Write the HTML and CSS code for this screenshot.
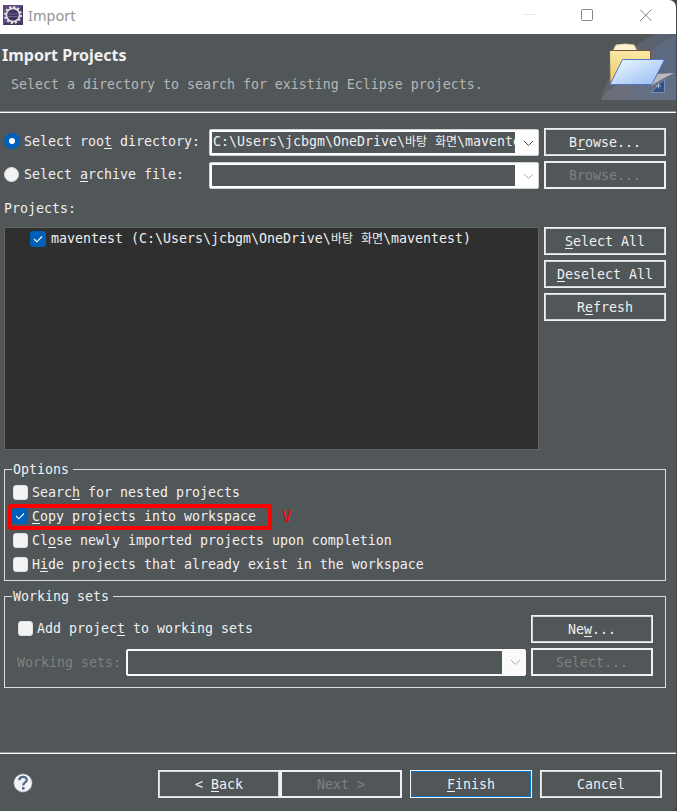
FILE: index.html
```html
<!DOCTYPE html>
<html lang="ko">
<head>
    <meta charset="UTF-8">
    <meta name="viewport" content="width=device-width, initial-scale=1.0">
    <title>Import</title>
    <link rel="stylesheet" href="styles.css">
</head>
<body>
    <div class="window">
        <header class="titlebar">
            <svg class="app-icon" width="20" height="20" viewBox="0 0 20 20">
                <rect width="20" height="20" fill="#5d4a82"/>
                <path d="M0 20L20 0V20Z" fill="#493763"/>
                <circle cx="10" cy="10" r="8" fill="none" stroke="#e4e1df" stroke-width="2" stroke-dasharray="2.2 1.99"/>
                <circle cx="10" cy="10" r="6.600" fill="#3d3561" stroke="#e4e1df" stroke-width="1.600"/>
                <path d="M4.7 9H15.3M5 11.5H15" stroke="#6b6290"/>
            </svg>
            <span class="title">Import</span>
            <svg class="controls" width="140" height="20" viewBox="0 0 140 20">
                <path d="M7 9.500H19" stroke="#e8e8e8"/>
                <rect x="65.500" y="4.500" width="11" height="11" rx="1" fill="none" stroke="#858585"/>
                <path d="M124 4.500L135.500 16M135.500 4.500L124 16" stroke="#858585"/>
            </svg>
        </header>

        <section class="banner">
            <div class="banner-text">
                <h1>Import Projects</h1>
                <p>Select a directory to search for existing Eclipse projects.</p>
            </div>
            <svg class="banner-icon" width="75" height="66" viewBox="0 0 75 66">
                <defs>
                    <linearGradient id="bg" x1="0" y1="0" x2="1" y2="0">
                        <stop offset="0" stop-color="#6b7079"/>
                        <stop offset="1" stop-color="#5c6b88"/>
                    </linearGradient>
                    <linearGradient id="back" x1="0" y1="0" x2="0" y2="1">
                        <stop offset="0" stop-color="#fbe9a4"/>
                        <stop offset="1" stop-color="#e9c862"/>
                    </linearGradient>
                    <linearGradient id="front" x1="0" y1="0" x2="1" y2="1">
                        <stop offset="0" stop-color="#f2fbff"/>
                        <stop offset="1" stop-color="#92b9f2"/>
                    </linearGradient>
                </defs>
                <path d="M0 66C5 43 22 16 54 0H75V66Z" fill="url(#bg)" opacity=".55"/>
                <path d="M0 66C8 53 20 45 75 39V66Z" fill="#747986" opacity=".55"/>
                <path d="M31 66C29 43 42 12 75 2V66Z" fill="#62708c" opacity=".5"/>
                <path d="M56 40L73 39Q60 45 50 52Z" fill="#b9b9be"/>
                <path d="M12 17L15 11Q25 9 33 11L36 17Z" fill="#fff3cf" stroke="#e5cf98"/>
                <path d="M8.500 17.500Q8.500 16.500 10 16.500H48Q49.500 16.500 49.500 18V30L9 49.500Z" fill="url(#back)" stroke="#755044"/>
                <path d="M21.500 25.500H63.500L51 50.500H9Z" fill="url(#front)" stroke="#5775c6" stroke-linejoin="round"/>
                <path d="M63.500 45V58.500H50Z" fill="#315187" stroke="#7392bc"/>
                <path d="M57.500 49.500V54.500M55 52H60" stroke="#dce8f4" stroke-width=".6"/>
            </svg>
        </section>

        <main>
            <div class="source">
                <span class="radio checked"></span>
                <label>Select roo<u>t</u> directory:</label>
                <div class="combo">
                    <span class="value">C:\Users\jcbgm\OneDrive\<span class="ko">바탕</span> <span class="ko">화면</span>\maventest</span>
                    <svg class="arrow" width="11" height="7" viewBox="0 0 11 7"><path d="M1 1L5.500 5.500L10 1"/></svg>
                </div>
                <div class="button">B<u>r</u>owse...</div>
            </div>
            <div class="source">
                <span class="radio"></span>
                <label>Select <u>a</u>rchive file:</label>
                <div class="combo disabled">
                    <span class="value"></span>
                    <svg class="arrow" width="11" height="7" viewBox="0 0 11 7"><path d="M1 1L5.500 5.500L10 1"/></svg>
                </div>
                <div class="button disabled">Browse...</div>
            </div>

            <div class="projects-label">Projects:</div>
            <div class="projects">
                <div class="tree">
                    <div class="tree-item">
                        <span class="checkbox checked"><svg width="10" height="8" viewBox="0 0 10 8"><path d="M1 4L3.800 6.800L9 1.500"/></svg></span>
                        <span>maventest (C:\Users\jcbgm\OneDrive\<span class="ko">바탕</span> <span class="ko">화면</span>\maventest)</span>
                    </div>
                </div>
                <div class="side-buttons">
                    <div class="button"><u>S</u>elect All</div>
                    <div class="button"><u>D</u>eselect All</div>
                    <div class="button">R<u>e</u>fresh</div>
                </div>
            </div>

            <fieldset class="options">
                <legend>Options</legend>
                <div class="option">
                    <span class="checkbox"></span>
                    <span>Searc<u>h</u> for nested projects</span>
                </div>
                <div class="option marked">
                    <span class="checkbox checked"><svg width="10" height="8" viewBox="0 0 10 8"><path d="M1 4L3.800 6.800L9 1.500"/></svg></span>
                    <span><u>C</u>opy projects into workspace</span>
                    <span class="outline"></span>
                    <span class="mark">V</span>
                </div>
                <div class="option">
                    <span class="checkbox"></span>
                    <span>Cl<u>o</u>se newly imported projects upon completion</span>
                </div>
                <div class="option">
                    <span class="checkbox"></span>
                    <span>H<u>i</u>de projects that already exist in the workspace</span>
                </div>
            </fieldset>

            <fieldset class="working-sets">
                <legend>Working sets</legend>
                <div class="set-row">
                    <span class="checkbox"></span>
                    <span class="set-text">Add projec<u>t</u> to working sets</span>
                    <div class="button">Ne<u>w</u>...</div>
                </div>
                <div class="set-row">
                    <span class="set-label">Working sets:</span>
                    <div class="combo disabled plain">
                        <span class="value"></span>
                        <svg class="arrow" width="11" height="7" viewBox="0 0 11 7"><path d="M1 1L5.500 5.500L10 1"/></svg>
                    </div>
                    <div class="button disabled">Select...</div>
                </div>
            </fieldset>
        </main>

        <footer>
            <svg class="help" width="20" height="20" viewBox="0 0 20 20">
                <circle cx="10" cy="10" r="9.300" fill="#f3f3f3" stroke="#69768f" stroke-width=".7"/>
                <path d="M6.300 7.300C6.300 2.800 13.800 2.900 13.800 7C13.800 9.500 10.200 9.400 10.200 12.500" fill="none" stroke="#53658c" stroke-width="2.300"/>
                <rect x="9" y="14" width="2.500" height="2.500" fill="#53658c"/>
            </svg>
            <div class="button">&lt; <u>B</u>ack</div>
            <div class="button disabled">Next &gt;</div>
            <div class="button default"><u>F</u>inish</div>
            <div class="button">Cancel</div>
        </footer>
    </div>
</body>
</html>
```
FILE: styles.css
```css
* {
    box-sizing: border-box;
}
body {
    margin: 0;
    background: #464646;
    font-family: "DejaVu Sans Mono", "Noto Sans CJK KR", monospace;
    font-size: 13.29px;
    line-height: 18px;
    color: #f0f0f0;
}
.window {
    display: flex;
    flex-direction: column;
    width: 676px;
    height: 811px;
    background: #515658;
    white-space: nowrap;
    overflow: hidden;
    border-radius: 0 7px 5px 0;
}
svg {
    display: block;
    flex: none;
}
u {
    text-decoration-thickness: 1px;
    text-underline-offset: 2px;
    text-decoration-skip-ink: none;
}
.ko {
    font-family: "Noto Sans CJK KR", sans-serif;
    font-size: 12px;
    line-height: 1;
}

/* title bar */
.titlebar {
    display: flex;
    flex: none;
    align-items: flex-start;
    height: 34px;
    padding: 5px 20px 0 3px;
    background: #fff;
}
.title {
    flex: 1;
    padding-left: 5px;
    font: 14.5px/21px "Noto Sans", sans-serif;
    color: #929292;
}

/* banner */
.banner {
    display: flex;
    flex: none;
    justify-content: space-between;
    height: 79px;
    border-bottom: 1px solid #fff;
    box-shadow: inset 0 -1px #919595;
}
.banner h1 {
    margin: 10px 0 0 2px;
    font: bold 16px/22px "Noto Sans", sans-serif;
}
.banner p {
    margin: 10px 0 0 11px;
    color: #b7b7b7;
}

/* controls */
.button {
    flex: none;
    width: 122px;
    height: 28px;
    padding-top: 4px;
    border: 1px solid #f0f0f0;
    box-shadow: inset 0 0 0 1px #d3d4d4;
    text-align: center;
    line-height: 19px;
}
.button.disabled {
    color: #808080;
    box-shadow: inset 0 0 0 1px #f0f0f0;
}
.button.default {
    box-shadow: inset 0 0 0 1px #0078d4;
}
.combo {
    display: flex;
    width: 330px;
    height: 27px;
    border: 1px solid #cfd0d0;
    border-radius: 2px;
    background: #fff;
    padding: 2px 0 2px 2px;
}
.value {
    flex: 1;
    overflow: hidden;
    padding-left: 1px;
    background: #515658;
    line-height: 20px;
}
.arrow {
    margin: 8px 4px 0 8px;
}
.arrow path {
    fill: none;
    stroke: #454545;
}
.disabled .arrow path {
    stroke: #acacac;
}
.plain {
    border-color: #fafafa;
    background: #fafafa;
    padding: 1px 0 1px 1px;
}
.checkbox {
    display: flex;
    flex: none;
    align-items: center;
    justify-content: center;
    width: 15px;
    height: 15px;
    border: 1px solid #dfe0e0;
    border-radius: 3px;
    background: #f3f3f3;
}
.checkbox.checked {
    width: 16px;
    height: 16px;
    border-color: #005fb8;
    background: #005fb8;
}
.checkbox path {
    fill: none;
    stroke: #fff;
    stroke-width: 1.1;
}
.radio {
    width: 15px;
    height: 15px;
    border: 1px solid #dedede;
    border-radius: 50%;
    background: #f3f3f3;
}
.radio.checked {
    width: 16px;
    height: 16px;
    border: 5px solid #005fb8;
    background: #fff;
}

/* source rows */
main {
    padding: 15px 10px 0 4px;
}
.source {
    display: grid;
    grid-template-columns: 20px 185px 335px 122px;
    align-items: center;
    height: 28px;
    margin-bottom: 5px;
}
.source .radio {
    margin: -1px 0 0;
}
.source .radio.checked {
    margin-top: -2px;
}
.projects-label {
    padding-top: 6px;
    height: 33px;
}

/* project list */
.projects {
    display: flex;
    gap: 5px;
}
.tree {
    width: 535px;
    height: 223px;
    border: 1px solid #646464;
    background: #2f2f2f;
}
.tree-item {
    display: flex;
    gap: 5px;
    padding: 2px 0 0 25px;
}
.tree-item .checkbox {
    margin-top: 1px;
}
.side-buttons {
    display: flex;
    flex-direction: column;
    gap: 5px;
}

/* groups */
fieldset {
    margin: 0;
    padding: 0;
    border: 1px solid #dcdcdc;
}
legend {
    height: 18px;
    margin-left: 7px;
    padding: 1px 4px 0 1px;
}
.options {
    height: 121px;
    margin-top: 10px;
}
.option {
    display: flex;
    align-items: center;
    gap: 4px;
    height: 24px;
    padding-left: 8px;
}
.options legend + .option {
    margin-top: 3px;
}
.option > .checkbox {
    margin-top: -2px;
}
.marked {
    position: relative;
    gap: 4px;
    padding-left: 7px;
}
.outline {
    position: absolute;
    left: 3px;
    top: -1px;
    width: 264px;
    height: 26px;
    border: 4px solid #fe0000;
    border-radius: 3px;
}
.mark {
    margin-left: 22px;
    color: #fe0000;
    font-size: 16px;
}
.working-sets {
    height: 101px;
    margin-top: 6px;
}
.set-row {
    display: flex;
    align-items: center;
    height: 28px;
    margin-bottom: 5px;
    padding: 0 12px 0 13px;
}
.working-sets legend + .set-row {
    margin-top: 10px;
}
.set-row .checkbox {
    margin-top: -2px;
}
.set-text {
    flex: 1;
    padding-left: 4px;
}
.set-label {
    width: 109px;
    margin: 1px 0 0 -1px;
    color: #808080;
}
.working-sets .combo {
    width: 400px;
    margin-right: 5px;
}

/* footer */
footer {
    display: flex;
    flex: none;
    height: 58px;
    margin-top: auto;
    padding: 16px 14px 0 13px;
    border-top: 1px solid #fff;
    box-shadow: 0 -1px #919595;
}
.help {
    margin: 3px auto 0 0;
}
.button.default {
    margin: 0 8px;
}
```
